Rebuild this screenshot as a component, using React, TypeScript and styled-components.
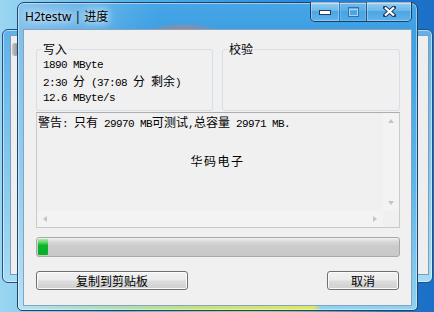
import React from "react";
import styled, { createGlobalStyle } from "styled-components";

const Global = createGlobalStyle`
  html, body { margin: 0; padding: 0; }
  body { width: 434px; height: 312px; overflow: hidden; background: #2a86d8; }
  * { box-sizing: border-box; }
`;

const Desktop = styled.div`
  position: relative;
  width: 434px;
  height: 312px;
  overflow: hidden;
  background:
    radial-gradient(ellipse 150px 26px at 250px 320px, rgba(232, 234, 90, 0.95), rgba(232, 234, 90, 0) 100%),
    linear-gradient(90deg, #9ad6f2 0%, #55b2ea 30%, #2a88da 70%, #1b6fc6 100%);
`;

const BackWindow = styled.div`
  position: absolute;
  left: 2px;
  top: 29px;
  width: 431px;
  height: 254px;
  border: 1px solid #24507e;
  border-radius: 6px;
  padding: 5px 3px 7px 7px;
  background: linear-gradient(180deg, #5fb2e8, #a4dcf4);
  box-shadow: inset 0 0 0 1px rgba(255, 255, 255, 0.5);
  display: flex;
`;

const BackClient = styled.div`
  flex: 1;
  background: #eeeeee;
  border: 1px solid #7f9db9;
  padding: 7px 0 0 1px;
`;

const BackKnob = styled.div`
  width: 6px;
  height: 13px;
  border-radius: 3px;
  background: linear-gradient(90deg, #c8c8c8, #8f8f8f);
`;

const Window = styled.div`
  position: absolute;
  left: 17px;
  top: 2px;
  width: 401px;
  height: 309px;
  border: 1px solid #1f4468;
  border-radius: 7px 7px 5px 5px;
  padding: 0 5px 4px 5px;
  display: flex;
  flex-direction: column;
  box-shadow: inset 0 0 0 1px rgba(255, 255, 255, 0.45);
  background:
    linear-gradient(90deg, rgba(130, 210, 235, 0) 0%, rgba(205, 228, 110, 0.9) 45%, rgba(228, 232, 92, 0.95) 74%, rgba(60, 150, 230, 0) 76%) bottom / 100% 5px no-repeat,
    radial-gradient(ellipse 38px 9px at 165px 29px, rgba(232, 120, 90, 0.9), rgba(232, 120, 90, 0) 100%),
    linear-gradient(90deg, rgba(255, 255, 255, 0.35) 0%, rgba(255, 255, 255, 0) 35%),
    linear-gradient(180deg, #46a6e6 0%, #3d9fe3 28px, #5db7ea 60%, #8fd2f1 100%);
`;

const TitleBar = styled.div`
  height: 26px;
  display: flex;
  align-items: flex-start;
  justify-content: space-between;
`;

const Title = styled.div`
  margin-top: 6px;
  padding-left: 2px;
  font: 12px/15px "Noto Sans", "Noto Sans CJK SC", sans-serif;
  color: #000;
  white-space: pre;
  text-shadow: 0 0 6px rgba(255, 255, 255, 0.95), 0 0 12px rgba(255, 255, 255, 0.85), 0 0 18px rgba(255, 255, 255, 0.6);
`;

const Caption = styled.div`
  display: flex;
  margin-top: -1px;
  height: 20px;
  border: 1px solid rgba(18, 48, 88, 0.85);
  border-top: none;
  border-radius: 0 0 5px 5px;
  overflow: hidden;
`;

const CapBtn = styled.div<{ $w: number; $dim?: boolean }>`
  width: ${(p) => p.$w}px;
  display: flex;
  align-items: center;
  justify-content: center;
  opacity: ${(p) => (p.$dim ? 0.55 : 1)};
  background: linear-gradient(
    180deg,
    rgba(255, 255, 255, 0.45) 0%,
    rgba(255, 255, 255, 0.22) 45%,
    rgba(255, 255, 255, 0.04) 50%,
    rgba(255, 255, 255, 0.18) 100%
  );
  box-shadow: inset 0 0 0 1px rgba(255, 255, 255, 0.3);
  & + & {
    border-left: 1px solid rgba(18, 48, 88, 0.7);
  }
`;

const Client = styled.div`
  flex: 1;
  background: #f0f0f0;
  border: 1px solid #86a3bf;
  padding: 12px 11px 0 12px;
  display: flex;
  flex-direction: column;
`;

const GroupRow = styled.div`
  display: grid;
  grid-template-columns: 177px 178px;
  column-gap: 9px;
  height: 66px;
`;

const Group = styled.fieldset`
  margin: 0;
  min-width: 0;
  padding: 2px 5px 4px 6px;
  border: 1px solid #d5dfe5;
  border-radius: 3px;
`;

const Legend = styled.legend`
  padding: 0 1px;
  margin-left: -1px;
  font: 12px/14px "Noto Sans CJK SC", sans-serif;
  color: #000;
`;

const Mono = styled.div`
  font-family: "Liberation Mono", "Noto Sans CJK SC", monospace;
  font-size: 11px;
  letter-spacing: -0.6px;
  line-height: 15px;
  color: #000;
  white-space: pre;
`;

const Han = styled.span`
  font-family: "Noto Sans CJK SC", sans-serif;
  font-size: 12px;
  letter-spacing: 0;
`;

const Edit = styled.div`
  margin-top: 4px;
  height: 116px;
  border: 1px solid #c8cacf;
  border-top-color: #abadb3;
  display: grid;
  grid-template-columns: 1fr 16px;
  grid-template-rows: 1fr 16px;
`;

const EditText = styled.div`
  padding: 1px 0 0 1px;
  overflow: hidden;
`;

const Watermark = styled.div`
  margin-top: 21px;
  padding-left: 14px;
  text-align: center;
  font: 12px/15px "Noto Sans CJK SC", sans-serif;
  letter-spacing: 1.5px;
  color: #000;
`;

const VScroll = styled.div`
  background: #f3f3f3;
  display: flex;
  flex-direction: column;
  justify-content: space-between;
`;

const HScroll = styled.div`
  background: #f3f3f3;
  display: flex;
  justify-content: space-between;
`;

const Corner = styled.div`
  background: #f0f0f0;
`;

const ArrowBox = styled.div`
  width: 16px;
  height: 16px;
  display: flex;
  align-items: center;
  justify-content: center;
`;

const Arrow = styled.div<{ $dir: "up" | "down" | "left" | "right" }>`
  width: 0;
  height: 0;
  border-style: solid;
  border-color: transparent;
  ${(p) =>
    p.$dir === "up"
      ? "border-width: 0 3.5px 4px 3.5px; border-bottom-color: #c4c4c4;"
      : p.$dir === "down"
      ? "border-width: 4px 3.5px 0 3.5px; border-top-color: #c4c4c4;"
      : p.$dir === "left"
      ? "border-width: 3.5px 4px 3.5px 0; border-right-color: #c4c4c4;"
      : "border-width: 3.5px 0 3.5px 4px; border-left-color: #c4c4c4;"}
`;

const Progress = styled.div`
  margin-top: 9px;
  height: 20px;
  border: 1px solid #a9a9a9;
  border-radius: 3px;
  padding: 1px;
  display: flex;
  background: linear-gradient(180deg, #f2f2f2 0%, #dadada 18%, #cbcbcb 45%, #c9c9c9 100%);
`;

const Fill = styled.div`
  border-radius: 1px;
  background: linear-gradient(180deg, #a6eaa9 0%, #5ed563 22%, #0cb52b 40%, #06b025 100%);
`;

const ButtonRow = styled.div`
  margin-top: 14px;
  display: flex;
  justify-content: space-between;
  padding-right: 1px;
`;

const Button = styled.button<{ $w: number }>`
  width: ${(p) => p.$w}px;
  height: 19px;
  padding: 0;
  border: 1px solid #707070;
  border-radius: 3px;
  background: linear-gradient(180deg, #f2f2f2 0%, #ebebeb 48%, #dddddd 52%, #cfcfcf 100%);
  box-shadow: inset 0 0 0 1px #fbfbfb;
  font: 12px/16px "Noto Sans CJK SC", sans-serif;
  color: #000;
`;

const MinIcon = () => (
  <svg width="12" height="6" viewBox="0 0 12 6">
    <rect x="0.5" y="1.5" width="11" height="4" fill="#fff" stroke="#243c5c" />
  </svg>
);

const MaxIcon = () => (
  <svg width="11" height="10" viewBox="0 0 11 10">
    <rect x="0.5" y="0.5" width="10" height="9" fill="none" stroke="#2a4a70" />
    <rect x="1.5" y="2.5" width="8" height="6" fill="none" stroke="#ffffff" />
  </svg>
);

const CloseIcon = () => (
  <svg width="13" height="11" viewBox="0 0 13 11">
    <path d="M2 1.5 L11 9.5 M11 1.5 L2 9.5" stroke="#243c5c" strokeWidth="4" strokeLinecap="square" />
    <path d="M2 1.5 L11 9.5 M11 1.5 L2 9.5" stroke="#ffffff" strokeWidth="2.2" strokeLinecap="butt" />
  </svg>
);

export default function App() {
  const progress = 10;
  return (
    <>
      <Global />
      <Desktop>
        <BackWindow>
          <BackClient>
            <BackKnob />
          </BackClient>
        </BackWindow>
        <Window>
          <TitleBar>
            <Title>H2testw | 进度</Title>
            <Caption>
              <CapBtn $w={28}>
                <MinIcon />
              </CapBtn>
              <CapBtn $w={27} $dim>
                <MaxIcon />
              </CapBtn>
              <CapBtn $w={45}>
                <CloseIcon />
              </CapBtn>
            </Caption>
          </TitleBar>
          <Client>
            <GroupRow>
              <Group>
                <Legend>写入</Legend>
                <Mono>1890 MByte</Mono>
                <Mono>
                  {"2:30 "}
                  <Han>分</Han>
                  {" (37:08 "}
                  <Han>分</Han>
                  {" "}
                  <Han>剩余</Han>
                  {")"}
                </Mono>
                <Mono>12.6 MByte/s</Mono>
              </Group>
              <Group>
                <Legend>校验</Legend>
              </Group>
            </GroupRow>
            <Edit>
              <EditText>
                <Mono>
                  <Han>警告</Han>
                  {": "}
                  <Han>只有</Han>
                  {" 29970 MB"}
                  <Han>可测试</Han>
                  {","}
                  <Han>总容量</Han>
                  {" 29971 MB."}
                </Mono>
                <Watermark>华码电子</Watermark>
              </EditText>
              <VScroll>
                <ArrowBox>
                  <Arrow $dir="up" />
                </ArrowBox>
                <ArrowBox>
                  <Arrow $dir="down" />
                </ArrowBox>
              </VScroll>
              <HScroll>
                <ArrowBox>
                  <Arrow $dir="left" />
                </ArrowBox>
                <ArrowBox>
                  <Arrow $dir="right" />
                </ArrowBox>
              </HScroll>
              <Corner />
            </Edit>
            <Progress>
              <Fill style={{ width: `${progress}px` }} />
            </Progress>
            <ButtonRow>
              <Button $w={152}>复制到剪贴板</Button>
              <Button $w={72}>取消</Button>
            </ButtonRow>
          </Client>
        </Window>
      </Desktop>
    </>
  );
}
